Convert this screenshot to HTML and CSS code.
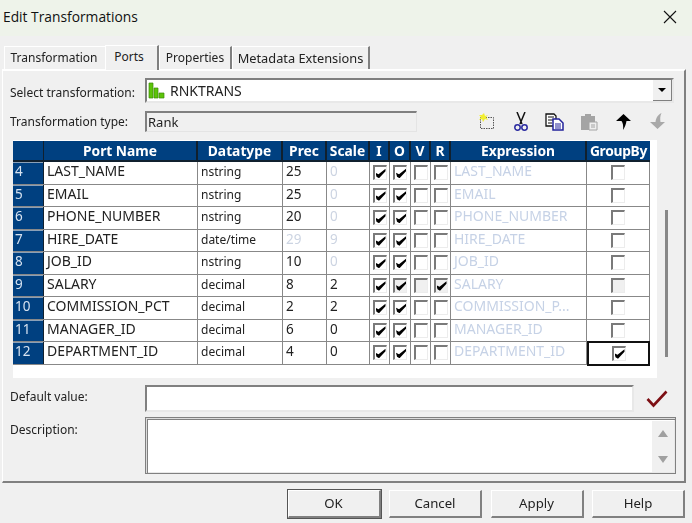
FILE: index.html
```html
<!DOCTYPE html>
<html>

<head>
    <meta charset="UTF-8">
    <title>Edit Transformations</title>
    <link rel="stylesheet" href="styles.css">
</head>

<body>
    <div class="dialog">
        <div class="titlebar">
            <span>Edit Transformations</span>
            <svg class="close" width="14" height="14" viewBox="0 0 14 14"><path d="M1 1L13 13M13 1L1 13" stroke="#111" stroke-width="1.1" fill="none"/></svg>
        </div>

        <div class="tabs">
            <div class="tab tab-first">Transformation</div>
            <div class="tab tab-active">Ports</div>
            <div class="tab tab-props">Properties</div>
            <div class="tab tab-meta">Metadata Extensions</div>
        </div>

        <div class="panel">
            <div class="form-row select-row">
                <label>Select transformation:</label>
                <div class="combo">
                    <svg class="rank-icon" width="17" height="17" viewBox="0 0 17 17">
                        <path d="M1 1h4v15H1zM6 6h4v10H6zM11 11h5v5h-5z" fill="#5cc40a" stroke="#3c8a08" stroke-width=".7"/>
                    </svg>
                    <span class="combo-text">RNKTRANS</span>
                    <div class="combo-btn"><span class="combo-arrow"></span></div>
                </div>
            </div>

            <div class="form-row type-row">
                <label>Transformation type:</label>
                <div class="type-box">Rank</div>
                <div class="toolbar">
                    <svg width="18" height="18" viewBox="0 0 18 18">
                        <rect x="2.5" y="4.5" width="13" height="11" fill="none" stroke="#555" stroke-dasharray="1.5 1"/>
                        <path d="M6 0l1 3 3-1-2 2 2 3-3-1-2 3-1-3-3 1 2-3-2-2 3 0z" fill="#f2ee30"/>
                    </svg>
                    <svg width="16" height="20" viewBox="0 0 16 20">
                        <path d="M4 0l5 12M12 0L7 12" stroke="#111" stroke-width="1.5" fill="none"/>
                        <circle cx="4.5" cy="15.5" r="2.7" fill="none" stroke="#2a2aa0" stroke-width="1.5"/>
                        <circle cx="11.5" cy="15.5" r="2.7" fill="none" stroke="#2a2aa0" stroke-width="1.5"/>
                    </svg>
                    <svg width="20" height="18" viewBox="0 0 20 18">
                        <path d="M1 1h8l2 2v10H1z" fill="#fff" stroke="#111" stroke-width="1.3"/>
                        <path d="M3 4h6M3 7h6M3 10h4" stroke="#111"/>
                        <path d="M8 6h6l4 4v7H8z" fill="#fff" stroke="#22229a" stroke-width="1.5"/>
                        <path d="M10 11h6M10 13h6M10 15h6" stroke="#22229a"/>
                    </svg>
                    <svg width="19" height="18" viewBox="0 0 19 18">
                        <path d="M1 3h4V1h6v2h4v14H1z" fill="#a4a4a4"/>
                        <path d="M9 9h8v8H9z" fill="#efefef" stroke="#a4a4a4"/>
                        <path d="M11 12h4M11 14h4" stroke="#a4a4a4"/>
                    </svg>
                    <svg width="15" height="16" viewBox="0 0 15 16">
                        <path d="M7.5 0L15 7H10.5C10 10 9 13 7 16 7.5 12 7 9 5.5 7H0z" fill="#000"/>
                    </svg>
                    <svg width="15" height="17" viewBox="0 0 15 17">
                        <path d="M7.5 16L15 9H10.5C10 6 10 3 11.500 0 7.500 2 6 5 5.500 9H0z" fill="#a9a9a9"/>
                    </svg>
                </div>
            </div>

            <div class="grid-wrap">
                <div class="grid">
                    <div class="grid-row grid-head">
                        <div class="num"></div>
                        <div>Port Name</div>
                        <div>Datatype</div>
                        <div>Prec</div>
                        <div>Scale</div>
                        <div>I</div>
                        <div>O</div>
                        <div>V</div>
                        <div>R</div>
                        <div>Expression</div>
                        <div class="head-group">GroupBy</div>
                    </div>

                    <div class="grid-row">
                        <div class="num">4</div><div class="name">LAST_NAME</div><div class="type">nstring</div><div class="val">25</div><div class="val off">0</div>
                        <div class="box"><i class="cb on"></i></div><div class="box"><i class="cb on"></i></div><div class="box"><i class="cb"></i></div><div class="box"><i class="cb"></i></div>
                        <div class="expr">LAST_NAME</div><div class="box"><i class="cb"></i></div>
                    </div>
                    <div class="grid-row">
                        <div class="num">5</div><div class="name">EMAIL</div><div class="type">nstring</div><div class="val">25</div><div class="val off">0</div>
                        <div class="box"><i class="cb on"></i></div><div class="box"><i class="cb on"></i></div><div class="box"><i class="cb"></i></div><div class="box"><i class="cb"></i></div>
                        <div class="expr">EMAIL</div><div class="box"><i class="cb"></i></div>
                    </div>
                    <div class="grid-row">
                        <div class="num">6</div><div class="name">PHONE_NUMBER</div><div class="type">nstring</div><div class="val">20</div><div class="val off">0</div>
                        <div class="box"><i class="cb on"></i></div><div class="box"><i class="cb on"></i></div><div class="box"><i class="cb"></i></div><div class="box"><i class="cb"></i></div>
                        <div class="expr">PHONE_NUMBER</div><div class="box"><i class="cb"></i></div>
                    </div>
                    <div class="grid-row">
                        <div class="num">7</div><div class="name">HIRE_DATE</div><div class="type">date/time</div><div class="val off">29</div><div class="val off">9</div>
                        <div class="box"><i class="cb on"></i></div><div class="box"><i class="cb on"></i></div><div class="box"><i class="cb"></i></div><div class="box"><i class="cb"></i></div>
                        <div class="expr">HIRE_DATE</div><div class="box"><i class="cb"></i></div>
                    </div>
                    <div class="grid-row">
                        <div class="num">8</div><div class="name">JOB_ID</div><div class="type">nstring</div><div class="val">10</div><div class="val off">0</div>
                        <div class="box"><i class="cb on"></i></div><div class="box"><i class="cb on"></i></div><div class="box"><i class="cb"></i></div><div class="box"><i class="cb"></i></div>
                        <div class="expr">JOB_ID</div><div class="box"><i class="cb"></i></div>
                    </div>
                    <div class="grid-row">
                        <div class="num">9</div><div class="name">SALARY</div><div class="type">decimal</div><div class="val">8</div><div class="val">2</div>
                        <div class="box"><i class="cb on"></i></div><div class="box"><i class="cb on dim"></i></div><div class="box"><i class="cb dim"></i></div><div class="box"><i class="cb on dim"></i></div>
                        <div class="expr">SALARY</div><div class="box"><i class="cb dim"></i></div>
                    </div>
                    <div class="grid-row">
                        <div class="num">10</div><div class="name">COMMISSION_PCT</div><div class="type">decimal</div><div class="val">2</div><div class="val">2</div>
                        <div class="box"><i class="cb on"></i></div><div class="box"><i class="cb on"></i></div><div class="box"><i class="cb"></i></div><div class="box"><i class="cb"></i></div>
                        <div class="expr">COMMISSION_P...</div><div class="box"><i class="cb"></i></div>
                    </div>
                    <div class="grid-row">
                        <div class="num">11</div><div class="name">MANAGER_ID</div><div class="type">decimal</div><div class="val">6</div><div class="val">0</div>
                        <div class="box"><i class="cb on"></i></div><div class="box"><i class="cb on"></i></div><div class="box"><i class="cb"></i></div><div class="box"><i class="cb"></i></div>
                        <div class="expr">MANAGER_ID</div><div class="box"><i class="cb"></i></div>
                    </div>
                    <div class="grid-row">
                        <div class="num">12</div><div class="name">DEPARTMENT_ID</div><div class="type">decimal</div><div class="val">4</div><div class="val">0</div>
                        <div class="box"><i class="cb on"></i></div><div class="box"><i class="cb on"></i></div><div class="box"><i class="cb"></i></div><div class="box"><i class="cb"></i></div>
                        <div class="expr">DEPARTMENT_ID</div><div class="box selected"><i class="cb on"></i></div>
                    </div>
                </div>
                <div class="scroll-line"></div>
            </div>

            <div class="form-row default-row">
                <label>Default value:</label>
                <div class="field default-field"></div>
                <svg class="valid-mark" width="22" height="18" viewBox="0 0 22 18">
                    <path d="M1.500 9L7.500 15.500 20.500 1.500" fill="none" stroke="#7d0f14" stroke-width="2.600"/>
                </svg>
            </div>

            <div class="form-row desc-row">
                <label>Description:</label>
                <div class="field desc-field">
                    <div class="desc-scroll">
                        <span class="arrow-up"></span>
                        <span class="arrow-down"></span>
                    </div>
                </div>
            </div>
        </div>

        <div class="buttons">
            <button class="btn btn-default">OK</button>
            <button class="btn">Cancel</button>
            <button class="btn">Apply</button>
            <button class="btn">Help</button>
        </div>
    </div>
</body>

</html>
```

FILE: styles.css
```css
* {
    box-sizing: border-box;
}

html, body {
    margin: 0;
    padding: 0;
}

body {
    font-family: 'Noto Sans', sans-serif;
    font-size: 12px;
    color: #222222;
    background-color: #f0f0f0;
}

.dialog {
    width: 692px;
    height: 523px;
    overflow: hidden;
    display: flex;
    flex-direction: column;
    filter: blur(0.3px);
}

.titlebar {
    height: 36px;
    flex: none;
    background-color: #eef3ea;
    display: flex;
    align-items: center;
    justify-content: space-between;
    padding: 0 15px 3px 3px;
    font-family: 'Open Sans', sans-serif;
    font-size: 13.800px;
    color: #111111;
}

.tabs {
    height: 33px;
    flex: none;
    display: flex;
    align-items: flex-end;
    padding-left: 4px;
}

.tab {
    height: 23px;
    line-height: 22px;
    text-align: center;
    border-top: 1px solid #ffffff;
    border-left: 1px solid #ffffff;
    border-right: 2px solid #808080;
}

.tab-first {
    width: 101px;
    padding-right: 2px;
    border-right: 0;
}

.tab-active {
    width: 54px;
    height: 25px;
    line-height: 21px;
    padding-right: 5px;
    background-color: #f0f0f0;
    margin-bottom: -1px;
    position: relative;
    z-index: 1;
}

.tab-props {
    width: 73px;
}

.tab-meta {
    width: 138px;
    font-size: 12.800px;
}

.panel {
    width: 684px;
    height: 414px;
    flex: none;
    margin-left: 2px;
    border-top: 2px solid #ffffff;
    border-left: 1px solid #ffffff;
    border-right: 2px solid #808080;
    border-bottom: 2px solid #808080;
    padding: 7px 0 0 7px;
}

.form-row {
    display: flex;
}

.form-row label {
    width: 135px;
    flex: none;
}

.select-row {
    height: 25px;
    align-items: center;
}

.select-row label {
    padding-top: 3px;
}

.combo {
    width: 529px;
    height: 25px;
    background-color: #ffffff;
    border-top: 2px solid #808080;
    border-left: 2px solid #808080;
    border-right: 2px solid #e8e8e8;
    border-bottom: 2px solid #e8e8e8;
    display: flex;
    align-items: center;
    padding-left: 1px;
}

.rank-icon {
    margin-right: 5px;
}

.combo-text {
    flex: 1;
    font-size: 14px;
    line-height: 22px;
}

.combo-btn {
    width: 19px;
    height: 21px;
    background-color: #f0f0f0;
    border-right: 1px solid #808080;
    border-bottom: 1px solid #808080;
    display: flex;
    align-items: center;
    justify-content: center;
}

.combo-arrow {
    border-left: 4px solid transparent;
    border-right: 4px solid transparent;
    border-top: 4px solid #000000;
}

.type-row {
    height: 23px;
    margin-top: 7px;
    align-items: center;
}

.type-box {
    width: 272px;
    height: 21px;
    line-height: 18px;
    padding-left: 1px;
    font-size: 13px;
    border-top: 2px solid #808080;
    border-left: 2px solid #808080;
    border-right: 1px solid #e4e4e4;
    border-bottom: 1px solid #e4e4e4;
}

.toolbar {
    width: 204px;
    margin-left: 53px;
    display: grid;
    grid-template-columns: repeat(6, 34px);
    justify-items: center;
    align-items: center;
}

.grid-wrap {
    width: 644px;
    height: 238px;
    margin: 7px 0 0 3px;
    background-color: #ffffff;
    position: relative;
}

.grid {
    width: 637px;
    padding-top: 1px;
}

.grid-row {
    display: grid;
    grid-template-columns: 31px 154px 85px 44px 43px 20px 21px 20px 20px 136px 63px;
    height: 22.500px;
    border-bottom: 1.500px solid #888888;
}

.grid-row > div {
    border-right: 1.500px solid #888888;
    line-height: 20px;
    white-space: nowrap;
    overflow: hidden;
}

.grid-row .name,
.grid-row .expr,
.grid-row .val,
.grid-row .num {
    line-height: 18px;
}

.grid-head {
    height: 21px;
    background-color: #004080;
    color: #ffffff;
    font-size: 13.800px;
    font-weight: 700;
    text-align: center;
    border-bottom: 2px solid #10202e;
}

.grid-head > div {
    border-right: 2px solid #10202e;
    line-height: 19px;
}

.grid-row .head-group {
    letter-spacing: -0.300px;
    border-right: 0;
}

.grid-row .num {
    background-color: #004080;
    color: #d6e2f0;
    font-size: 13.500px;
    padding-left: 2px;
    border-right: 1.500px solid #10202e;
    box-shadow: inset 0 1px 0 #8aa0b8;
}

.grid-head .num {
    box-shadow: none;
}

.name,
.type,
.val,
.expr {
    padding-left: 3px;
}

.name,
.expr {
    font-size: 14px;
}

.val {
    font-size: 13.500px;
}

.off {
    color: #ccd4e2;
}

.expr {
    color: #c6d2e6;
}

.box {
    display: flex;
    align-items: center;
    justify-content: center;
}

.cb {
    width: 14px;
    height: 15px;
    background-color: #ffffff;
    border-top: 2px solid #7a7a7a;
    border-left: 2px solid #7a7a7a;
    border-right: 1px solid #ececec;
    border-bottom: 1px solid #ececec;
    position: relative;
}

.cb.dim {
    background-color: #f0f0f0;
}

.cb.on::after {
    content: "";
    position: absolute;
    left: 1px;
    top: 1px;
    width: 10px;
    height: 10px;
    background-color: #000000;
    clip-path: polygon(0 45%, 30% 60%, 100% 5%, 100% 30%, 35% 100%, 10% 85%);
}

.grid-row .selected {
    border: 2px solid #111111;
    margin: -1px 0 -2px;
}

.scroll-line {
    position: absolute;
    left: 652px;
    top: 70px;
    width: 3px;
    height: 147px;
    background-color: #888888;
}

.default-row {
    height: 27px;
    margin-top: 7px;
    align-items: flex-start;
}

.default-row label {
    line-height: 24px;
}

.field {
    background-color: #ffffff;
    border-top: 2px solid #808080;
    border-left: 2px solid #808080;
    border-right: 2px solid #e8e8e8;
    border-bottom: 2px solid #e8e8e8;
}

.default-field {
    width: 489px;
    height: 27px;
}

.valid-mark {
    margin: 5px 0 0 12px;
}

.desc-row {
    height: 57px;
    margin-top: 5px;
}

.desc-row label {
    line-height: 26px;
}

.desc-field {
    width: 531px;
    height: 57px;
    border: 1px solid #808080;
    box-shadow: inset 1px 1px 0 #dcdcdc, inset 2px 2px 0 #808080, inset -1px -1px 0 #e8e8e8;
    padding: 3px 1px 1px 3px;
    display: flex;
    justify-content: flex-end;
}

.desc-scroll {
    width: 22px;
    background-color: #f0f0f0;
    display: flex;
    flex-direction: column;
    align-items: center;
    justify-content: space-between;
    padding: 9px 0 9px;
}

.arrow-up {
    border-left: 5px solid transparent;
    border-right: 5px solid transparent;
    border-bottom: 7px solid #a0a0a0;
}

.arrow-down {
    border-left: 5px solid transparent;
    border-right: 5px solid transparent;
    border-top: 7px solid #a0a0a0;
}

.buttons {
    display: flex;
    gap: 8.500px;
    justify-content: flex-end;
    padding: 7px 7px 0 0;
}

.btn {
    width: 93px;
    height: 28px;
    font-family: 'Noto Sans', sans-serif;
    font-size: 13.200px;
    color: #222222;
    background-color: #f0f0f0;
    border-top: 1px solid #ffffff;
    border-left: 1px solid #ffffff;
    border-right: 2px solid #808080;
    border-bottom: 2px solid #808080;
    padding: 0 0 1px;
}

.btn-default {
    outline: 1px solid #555555;
}
```
